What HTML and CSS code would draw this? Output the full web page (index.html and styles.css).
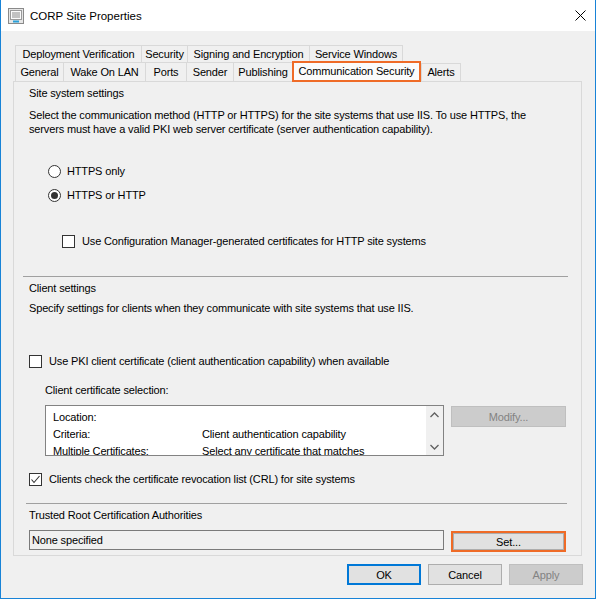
FILE: index.html
```html
<!DOCTYPE html>
<html>
<head>
<meta charset="utf-8">
<link rel="stylesheet" href="styles.css">
</head>
<body>
<div class="window">
  <div class="titlebar">
    <svg class="app-icon" viewBox="0 0 16 16" width="16" height="16">
      <rect x="0.5" y="0.5" width="15" height="15" fill="#e6e6e6" stroke="#8a8a8a"/>
      <rect x="2.5" y="2.5" width="11" height="9" fill="#fafafa" stroke="#9a9a9a"/>
      <line x1="4" y1="5" x2="12" y2="5" stroke="#8a8a8a"/>
      <line x1="4" y1="7" x2="12" y2="7" stroke="#8a8a8a"/>
      <line x1="4" y1="9" x2="12" y2="9" stroke="#8a8a8a"/>
      <rect x="5" y="12.5" width="6" height="2" fill="#2aa0d8"/>
    </svg>
    <span class="title">CORP Site Properties</span>
    <svg class="close" viewBox="0 0 11 11" width="11" height="11">
      <line x1="0.5" y1="0.5" x2="10.5" y2="10.5" stroke="#000" stroke-width="1"/>
      <line x1="10.5" y1="0.5" x2="0.5" y2="10.5" stroke="#000" stroke-width="1"/>
    </svg>
  </div>
  <div class="client">
    <div class="tabs">
      <div class="tabrow row1">
        <div class="tab t-deploy">Deployment Verification</div>
        <div class="tab t-security">Security</div>
        <div class="tab t-signing">Signing and Encryption</div>
        <div class="tab t-service">Service Windows</div>
      </div>
      <div class="tabrow row2">
        <div class="tab t-general">General</div>
        <div class="tab t-wake">Wake On LAN</div>
        <div class="tab t-ports">Ports</div>
        <div class="tab t-sender">Sender</div>
        <div class="tab t-publishing">Publishing</div>
        <div class="tab sel">Communication Security</div>
        <div class="tab t-alerts">Alerts</div>
      </div>
    </div>
    <div class="panel">
      <div class="row r-site">Site system settings</div>
      <div class="desc">Select the communication method (HTTP or HTTPS) for the site systems that use IIS. To use HTTPS, the<br>servers must have a valid PKI web server certificate (server authentication capability).</div>
      <div class="row option r-radio1"><span class="radio"></span><span class="opt-label">HTTPS only</span></div>
      <div class="row option r-radio2"><span class="radio on"></span><span class="opt-label">HTTPS or HTTP</span></div>
      <div class="row option r-check1"><span class="check"></span><span class="chk-label">Use Configuration Manager-generated certificates for HTTP site systems</span></div>
      <div class="sep sep1"></div>
      <div class="row r-client">Client settings</div>
      <div class="row r-specify">Specify settings for clients when they communicate with site systems that use IIS.</div>
      <div class="row r-pki"><span class="check"></span><span class="chk-label">Use PKI client certificate (client authentication capability) when available</span></div>
      <div class="row r-selection">Client certificate selection:</div>
      <div class="field-row r-list">
        <div class="listbox">
          <div class="list-rows">
            <div class="lrow"><span class="lcol1">Location:</span><span></span></div>
            <div class="lrow"><span class="lcol1">Criteria:</span><span>Client authentication capability</span></div>
            <div class="lrow"><span class="lcol1">Multiple Certificates:</span><span>Select any certificate that matches</span></div>
          </div>
          <div class="scroll">
            <div class="sbtn"><svg width="9" height="6" viewBox="0 0 9 6"><polyline points="0.5,5 4.5,1 8.5,5" fill="none" stroke="#606060" stroke-width="1.3"/></svg></div>
            <div class="sbtn"><svg width="9" height="6" viewBox="0 0 9 6"><polyline points="0.5,1 4.5,5 8.5,1" fill="none" stroke="#606060" stroke-width="1.3"/></svg></div>
          </div>
        </div>
        <button class="btn side disabled">Modify...</button>
      </div>
      <div class="row r-crl"><span class="check"><svg width="11" height="11" viewBox="0 0 11 11"><polyline points="1.5,5.5 4,8.5 9.5,2" fill="none" stroke="#333" stroke-width="1.1"/></svg></span><span class="chk-label">Clients check the certificate revocation list (CRL) for site systems</span></div>
      <div class="sep sep2"></div>
      <div class="row r-trusted">Trusted Root Certification Authorities</div>
      <div class="field-row r-text">
        <div class="textbox">None specified</div>
        <button class="btn side highlight">Set...</button>
      </div>
    </div>
    <div class="buttons">
      <button class="btn dlg default">OK</button>
      <button class="btn dlg">Cancel</button>
      <button class="btn dlg disabled">Apply</button>
    </div>
  </div>
</div>
</body>
</html>
```

FILE: styles.css
```css
* { box-sizing: border-box; }

body {
  margin: 0;
  font-family: "Liberation Sans", Arial, sans-serif;
  font-size: 11px;
  letter-spacing: -0.15px;
  color: #000;
}

.window {
  width: 596px;
  height: 599px;
  background: #f0f0f0;
  border: 1px solid #1883d7;
  border-top: none;
}

.titlebar {
  height: 31px;
  background: #fff;
  display: flex;
  align-items: center;
}

.app-icon { margin-left: 7px; flex: none; }

.title {
  margin-left: 6px;
  font-size: 11.5px;
  letter-spacing: 0;
}

.close { margin-left: auto; margin-right: 9px; }

.client { padding: 14px 13px 0 12px; }

.tabrow {
  display: flex;
  align-items: flex-start;
  margin-left: 2px;
}

.tab {
  border: 1px solid #d9d9d9;
  border-bottom: none;
  background: #f0f0f0;
  text-align: center;
  white-space: nowrap;
  margin-left: -1px;
  padding-top: 1px;
  flex: none;
}

.tab:first-child { margin-left: 0; }

.row1 .tab { height: 17px; line-height: 15px; }
.row2 .tab { height: 19px; line-height: 17px; }

.t-deploy { width: 127px; }
.t-security { width: 47px; }
.t-signing { width: 123px; }
.t-service { width: 94px; }
.t-general { width: 49px; }
.t-wake { width: 83px; }
.t-ports { width: 42px; }
.t-sender { width: 48px; }
.t-publishing { width: 60px; }

.row2 .tab.sel {
  width: 129px;
  height: 21px;
  margin-top: -1px;
  margin-bottom: -1px;
  margin-left: -1px;
  padding-top: 0;
  line-height: 16px;
  border: 2px solid #ef6b27;
  background: #fbfbfb;
  position: relative;
  z-index: 1;
}

.row2 .tab.t-alerts {
  width: 40px;
  height: 18px;
  margin-top: 1px;
  margin-left: 0;
  padding-top: 0;
}

.panel {
  border: 1px solid #d9d9d9;
  padding: 0 14px 3px 15px;
}

.row {
  display: flex;
  align-items: center;
  height: 16px;
  white-space: nowrap;
}

.r-site { margin-top: 3px; }

.desc {
  margin-top: 7px;
  line-height: 14px;
  white-space: nowrap;
}

.r-radio1 { margin-top: 27px; padding-left: 19px; }
.r-radio2 { margin-top: 8px; padding-left: 19px; }
.r-check1 { margin-top: 30px; padding-left: 33px; }

.radio {
  width: 13px;
  height: 13px;
  border: 1px solid #333;
  border-radius: 50%;
  background: #fff;
  display: flex;
  align-items: center;
  justify-content: center;
  flex: none;
}

.radio.on::after {
  content: "";
  width: 7px;
  height: 7px;
  border-radius: 50%;
  background: #333;
}

.opt-label { margin-left: 6px; }

.check {
  width: 13px;
  height: 13px;
  border: 1px solid #333;
  background: #fff;
  display: flex;
  align-items: center;
  justify-content: center;
  flex: none;
}

.chk-label { margin-left: 7px; }

.sep {
  height: 1px;
  background: #a0a0a0;
}

.sep1 { margin: 27px -1px 0 -6px; }
.sep2 { margin: 16px 0 0 -3px; }

.r-client { margin-top: 3px; }
.r-specify { margin-top: 4px; }
.r-pki { margin-top: 37px; }
.r-selection { margin-top: 13px; padding-left: 16px; }

.field-row {
  display: flex;
  align-items: flex-start;
}

.r-list { margin-top: 7px; padding-left: 16px; }

.listbox {
  width: 399px;
  height: 51px;
  border: 1px solid #828282;
  background: #fff;
  display: flex;
  overflow: hidden;
  flex: none;
}

.list-rows {
  flex: 1;
  padding: 2px 0 0 7px;
  white-space: nowrap;
}

.lrow {
  display: flex;
  align-items: center;
  height: 17px;
}

.lcol1 { width: 149px; flex: none; }

.scroll {
  width: 17px;
  background: #f0f0f0;
  display: flex;
  flex-direction: column;
  justify-content: space-between;
  flex: none;
}

.sbtn {
  height: 17px;
  display: flex;
  align-items: center;
  justify-content: center;
}

.btn {
  font-family: "Liberation Sans", Arial, sans-serif;
  font-size: 11px;
  letter-spacing: -0.15px;
  color: #000;
  height: 21px;
  border: 1px solid #adadad;
  background: #e1e1e1;
  padding: 0;
  display: flex;
  align-items: center;
  justify-content: center;
  flex: none;
}

.btn.side {
  width: 115px;
  margin-left: 7px;
  margin-top: 1px;
}

.btn.disabled {
  background: #cccccc;
  border-color: #bfbfbf;
  color: #838383;
}

.btn.highlight {
  border: 2px solid #ef6b27;
  box-shadow: inset 0 0 0 1px #adadad;
}

.r-crl { margin-top: 15px; }
.r-trusted { margin-top: 3px; }
.r-text { margin-top: 7px; }

.textbox {
  width: 415px;
  height: 20px;
  border: 1px solid #7a7a7a;
  background: #f0f0f0;
  padding-left: 2px;
  display: flex;
  align-items: center;
  flex: none;
}

.buttons {
  display: flex;
  justify-content: flex-end;
  gap: 7px;
  margin-top: 8px;
  margin-right: -1px;
}

.btn.dlg { width: 74px; }

.btn.default { border: 2px solid #0078d7; }
```
